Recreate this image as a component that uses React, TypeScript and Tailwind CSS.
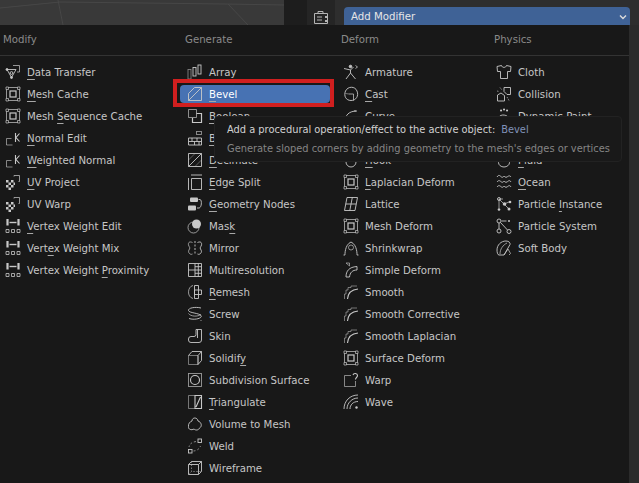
import type { ReactNode } from "react";

const meshBox = (
  <>
    <path d="M3.500 1.500h9M3.500 14.500h9M1.500 3.500v9M14.500 3.500v9" opacity="0.8" />
    <path d="M1 1h2.500v2.500H1zM12.500 1H15v2.500h-2.500zM1 12.500h2.500V15H1zM12.500 12.500H15V15h-2.500z" strokeWidth="0.7" />
    <rect x="5" y="5" width="6" height="6" strokeWidth="1.200" />
  </>
);

const checker = (
  <>
    <path d="M9 2.500V1.500h5.500v6h-1" opacity="0.8" />
    <path
      d="M1 6h2.500v2.500H1zM6 6h2.500v2.500H6zM3.500 8.500H6V11H3.500zM8.500 8.500H10V11H8.500zM1 11h2.500v2.500H1zM6 11h2.500v2.500H6zM3.500 13.500H6V16H3.500z"
      fill="currentColor"
      stroke="none"
    />
  </>
);

const weight = (
  <>
    <path d="M2.500 1v6.500M13.500 1v6.500" strokeWidth="2.200" />
    <path d="M4.500 4.500h7" strokeWidth="1.400" />
    <path d="M1 11.500h3v3H1zM6.500 11.500h3v3h-3zM12 11.500h3v3h-3z" strokeWidth="0.8" />
  </>
);

const normal = (
  <>
    <path d="M1.500 8.500h5M1.500 8.500v6.500h6" opacity="0.7" />
    <path d="M10.500 3v9M14.500 3.500 11 7.500l3.500 4" strokeWidth="1.100" />
  </>
);

const smooth = (
  <>
    <path d="M1.500 15v-5h1.500V6h2V3.500h3V2h6" opacity="0.6" />
    <path d="M4.500 15C5 9 9 5.500 15 5" strokeWidth="1.100" />
  </>
);

const icons: Record<string, ReactNode> = {
  transfer: (
    <>
      <path d="M2 5.500 6.500 13.500 11 5.500z" />
      <circle cx="6.500" cy="9" r="1.400" />
      <path d="M8 1.500h6.500v6.500h-2.500" opacity="0.8" />
      <circle cx="2" cy="5.500" r="1" fill="currentColor" />
      <circle cx="6.500" cy="13.500" r="1" fill="currentColor" />
    </>
  ),
  mesh: meshBox,
  normal,
  uv: checker,
  weight,
  array: (
    <>
      <rect x="1" y="5.500" width="3" height="9.500" opacity="0.6" />
      <rect x="6" y="3.500" width="3" height="8.500" />
      <rect x="11" y="1" width="3" height="9" />
    </>
  ),
  bevel: <path d="M1.500 7.500 7.500 1.500h7v13h-13zM1.500 14.500l13-13" />,
  boolean: (
    <>
      <path d="M1.500 1.500h8v8h-8z" opacity="0.75" />
      <path d="M9.500 5.500h5v9h-9V10" strokeWidth="1.200" />
    </>
  ),
  build: (
    <>
      <path d="M1.500 8h13v7h-13zM1.500 11.500h13M5 8v3.500M10 8v3.500M7.500 11.500V15M12 11.500V15" />
      <rect x="9.500" y="1.500" width="5" height="3" opacity="0.7" />
    </>
  ),
  decimate: (
    <>
      <path d="M1.500 1.500h13v13h-13zM1.500 14.500l13-13" />
      <path d="M1.500 8 8 1.500M8 14.500l6.500-6.500" opacity="0.45" />
    </>
  ),
  split: <path d="M4 1h11M1.500 4v12M4.500 4.500h10v11h-10z" />,
  nodes: (
    <>
      <rect x="3" y="1.500" width="8" height="4.500" rx="1" fill="currentColor" stroke="none" />
      <rect x="1" y="9.500" width="8" height="5" rx="1" fill="currentColor" stroke="none" />
      <path d="M11.500 3.500h1.500c2 0 2 8-1 8.500h-2" />
    </>
  ),
  mask: (
    <>
      <circle cx="6.500" cy="9.500" r="5.500" opacity="0.8" />
      <circle cx="9.500" cy="6" r="4.500" fill="currentColor" stroke="none" />
    </>
  ),
  mirror: (
    <>
      <path d="M8 1v14" strokeDasharray="2 1.500" />
      <path d="M5.500 2.500C2 1 1 3 1.500 5c.5 2 2 2.500 1 4s-1.500 3 0 4.500 3 .5 3 .5" opacity="0.8" />
      <path d="M10.500 2.500c3.500-1.500 4.500.5 4 2.500s-2 2.500-1 4 1.500 3 0 4.500-3 .5-3 .5" />
    </>
  ),
  multires: <path d="M1.500 1.500h13v13h-13zM1.500 8h13M8 1.500v13M11.300 1.500v13M8 4.700h6.500M8 11.300h6.500" />,
  remesh: (
    <>
      <path d="M6 1.500C.5 2.500-.5 13 6 14.500" opacity="0.8" />
      <path d="M7.500 1.500h4v13h-4zM7.500 6h7v4.500h-7z" />
    </>
  ),
  screw: (
    <>
      <path d="M14 2C8 .5 1 2 1.500 4.500S12 7 14 9.500 8 14.500 2 12.500" />
      <path d="M1.500 7.500c2 3 9 3.500 12.500 1M14 14v1" opacity="0.8" />
    </>
  ),
  skin: <path d="M9 1.500h5.500V12a2.500 2.500 0 0 1-2.500 2.500H4A2.500 2.500 0 0 1 1.500 12V11A2.500 2.500 0 0 1 4 8.500h3A2 2 0 0 0 9 6.500zM10.500 1.500V10" />,
  solidify: (
    <>
      <path d="M1.500 5.500h9.500v9h-9.500z" opacity="0.6" />
      <path d="M1.500 5.500 5 1.500h9.500v9L11 14.500M14.500 1.500 11 5.500v9" />
    </>
  ),
  subsurf: (
    <>
      <rect x="1.500" y="1.500" width="13" height="13" opacity="0.75" />
      <circle cx="8" cy="8" r="4.500" strokeWidth="1.100" />
    </>
  ),
  triangulate: (
    <>
      <path d="M8 1.500H1.500v13H8" opacity="0.6" />
      <path d="M8 1.500h6.500v13H8zM9 13 13.500 3" strokeWidth="1.100" />
    </>
  ),
  volume: <path d="M5 5C5 1 10.500 1 11 5c3.500 1 4.500 5.500 1.500 7-1 2.500-4 2.500-5.500 1-2.500 1.500-6 .5-5.500-2.500C1 8 3 5.500 5 5z" />,
  weld: (
    <>
      <rect x="11" y="1" width="3.500" height="3.500" strokeWidth="0.9" />
      <rect x="1.500" y="11.500" width="3.500" height="3.500" strokeWidth="0.9" />
      <path d="M9 3.500C5 4 2.500 6 2 9M6.500 13c3 0 6-2 7-5" strokeDasharray="2 2" opacity="0.7" />
    </>
  ),
  wireframe: (
    <>
      <path d="M1.500 4.500 4.500 1.500h10v10l-3 3h-10zM1.500 4.500h10v10M11.500 4.500l3-3" />
      <path d="M1.500 14.500 4.500 11.500h10M4.500 1.500v10" strokeDasharray="1.500 1.500" opacity="0.6" />
    </>
  ),
  armature: (
    <>
      <circle cx="7.500" cy="2.500" r="1.300" fill="currentColor" />
      <path d="M1 4.500 7.500 6l3-3M7.500 6v3L3 15M7.500 9l5 6" />
      <path d="M12.500 1.500l2 1.500-2 1.500" strokeWidth="0.8" />
    </>
  ),
  cast: (
    <>
      <path d="M2.500 5C5 0 12 0 14 5c2 5-1 9.500-6 9.500S.5 10 2.500 5z" />
      <path d="M6 8h4.500v6.500" opacity="0.85" />
      <path d="M6 8l-3.500-.5" opacity="0.6" />
    </>
  ),
  curve: <path d="M2 14C2 7 6 3 14 3M1 14h3M12 2v2" />,
  hook: <path d="M3 3v7a5 5 0 0 0 10 0V6M13 6l-2.500 2.500" />,
  lattice: <path d="M4 1.500h10.500L12 14.500H1.500zM2.700 8h10.500M9.300 1.500 6.800 14.500" />,
  shrinkwrap: (
    <>
      <path d="M.5 15H2S1.500 5 8 2c6.500 3 6 13 6 13h1.500" />
      <circle cx="8" cy="7.500" r="2.500" opacity="0.75" />
    </>
  ),
  simple: (
    <>
      <path d="M3 1h3.500v3L3 1z" opacity="0.7" />
      <path d="M3 15c0-6 3-10 11-10.500V8C9.500 8 7 10.500 6.500 15z" />
    </>
  ),
  smooth,
  warp: (
    <>
      <path d="M8 3.500H1.500v11h11v-5" opacity="0.7" />
      <path d="M10 3c.5-2 4.500-2 4.500 .5 0 2-2 2-2 4M12.500 9v.5" strokeWidth="1.100" />
    </>
  ),
  wave: (
    <>
      <path d="M1 15C1 7 7 1 15 1M4 15C4 9 9 4 15 4M7 15c0-4 3-7.500 8-7.500" />
      <circle cx="13.500" cy="13.500" r="1.200" fill="currentColor" stroke="none" />
    </>
  ),
  cloth: <path d="M5.500 1.500 1 2.500l.5 5H4.500v7h7v-7h3l.5-5-4.500-1C10 4 6 4 5.500 1.500z" />,
  collision: (
    <>
      <path d="M8 1.500h6.500v7H11L8 5.500zM1.500 9 5 7l3.500 2.500v5.500h-7z" />
      <path d="M4 1.500 6 4M1 5l2 .5M11 11l2 3.500" strokeDasharray="1.500 1" opacity="0.75" />
    </>
  ),
  paint: (
    <>
      <path d="M2 13c-1-8 11-8 12 0" />
      <path d="M5 2.500h.1M8 1.500h.1M11 2.500h.1" strokeWidth="2" strokeLinecap="round" />
    </>
  ),
  explode: <path d="M8 1v4M8 11v4M1 8h4M11 8h4M3 3l3 3M13 3l-3 3M3 13l3-3M13 13l-3-3" />,
  fluid: <path d="M8 1C6 5 2.500 7 2.500 10.500a5.500 4.500 0 0 0 11 0C13.500 7 10 5 8 1z" />,
  ocean: (
    <path d="M1 3c2-3 3-1 4.500 0S8 2 8 2s1.500 2 3 1 2.500-2 4 0M1 8c2-2.500 3-1 4.500 0S8 7 8 7s1.500 2 3 1 2.500-2.500 4 0M1 13c2-2.500 3-1 4.500 0S8 12 8 12s1.500 2 3 1 2.500-2.500 4 0" />
  ),
  instance: (
    <>
      <path d="M3 3 8 8M3 3v9M8 8l5-2M8 8l5 5M3 3h4" opacity="0.8" />
      <circle cx="3" cy="3" r="1.500" />
      <circle cx="8.500" cy="8" r="1.800" fill="currentColor" stroke="none" />
      <circle cx="14" cy="6" r="1.300" fill="currentColor" stroke="none" />
      <circle cx="13" cy="13" r="1.500" fill="currentColor" stroke="none" />
      <circle cx="3" cy="13.500" r="1.300" fill="currentColor" stroke="none" />
    </>
  ),
  particles: (
    <>
      <path d="M4.500 4.500 11.500 12M3 5v6M5.500 3h5" />
      <circle cx="3" cy="3" r="2" />
      <circle cx="3" cy="13" r="2" />
      <circle cx="13" cy="13.500" r="2" />
      <circle cx="13" cy="3" r="1" fill="currentColor" stroke="none" />
    </>
  ),
  softbody: (
    <>
      <path d="M1 10C1 5 5 1 10 1c3 0 4.500 2 4 3.500L8 15H3c-1.500 0-2-3-2-5z" />
      <path d="M4 14C4 9 7 5 11 3M8 15 12 9l2.500 4.500-1.500 1.500" opacity="0.8" />
    </>
  ),
};

function Icon({ name }: { name: string }) {
  return (
    <svg
      viewBox="0 0 16 16"
      className="h-4 w-4 shrink-0 text-[#c8c8c8]"
      fill="none"
      stroke="currentColor"
      strokeWidth="0.9"
    >
      {icons[name]}
    </svg>
  );
}

// [label, icon, index of the underlined letter]
type Item = [string, string, number?];

const columns: { title: string; className: string; items: Item[] }[] = [
  {
    title: "Modify",
    className: "w-[182px]",
    items: [
      ["Data Transfer", "transfer", 0],
      ["Mesh Cache", "mesh", 0],
      ["Mesh Sequence Cache", "mesh", 5],
      ["Normal Edit", "normal", 0],
      ["Weighted Normal", "normal", 0],
      ["UV Project", "uv", 0],
      ["UV Warp", "uv"],
      ["Vertex Weight Edit", "weight", 0],
      ["Vertex Weight Mix", "weight", 4],
      ["Vertex Weight Proximity", "weight", 14],
    ],
  },
  {
    title: "Generate",
    className: "w-[156px]",
    items: [
      ["Array", "array"],
      ["Bevel", "bevel", 0],
      ["Boolean", "boolean", 0],
      ["Build", "build", 0],
      ["Decimate", "decimate", 0],
      ["Edge Split", "split", 0],
      ["Geometry Nodes", "nodes", 0],
      ["Mask", "mask", 3],
      ["Mirror", "mirror"],
      ["Multiresolution", "multires"],
      ["Remesh", "remesh", 0],
      ["Screw", "screw"],
      ["Skin", "skin"],
      ["Solidify", "solidify", 7],
      ["Subdivision Surface", "subsurf"],
      ["Triangulate", "triangulate", 0],
      ["Volume to Mesh", "volume"],
      ["Weld", "weld"],
      ["Wireframe", "wireframe"],
    ],
  },
  {
    title: "Deform",
    className: "w-[153px]",
    items: [
      ["Armature", "armature"],
      ["Cast", "cast", 0],
      ["Curve", "curve", 1],
      ["Displace", "mesh", 0],
      ["Hook", "hook", 0],
      ["Laplacian Deform", "mesh", 0],
      ["Lattice", "lattice"],
      ["Mesh Deform", "mesh"],
      ["Shrinkwrap", "shrinkwrap"],
      ["Simple Deform", "simple"],
      ["Smooth", "smooth"],
      ["Smooth Corrective", "smooth"],
      ["Smooth Laplacian", "smooth"],
      ["Surface Deform", "mesh"],
      ["Warp", "warp"],
      ["Wave", "wave"],
    ],
  },
  {
    title: "Physics",
    className: "w-[138px]",
    items: [
      ["Cloth", "cloth"],
      ["Collision", "collision"],
      ["Dynamic Paint", "paint"],
      ["Explode", "explode"],
      ["Fluid", "fluid", 0],
      ["Ocean", "ocean", 0],
      ["Particle Instance", "instance", 9],
      ["Particle System", "particles"],
      ["Soft Body", "softbody"],
    ],
  },
];

function Label({ text, at }: { text: string; at?: number }) {
  if (at === undefined) return <span className="pt-[1px]">{text}</span>;
  return (
    <span className="pt-[1px]">
      {text.slice(0, at)}
      <u className="underline decoration-[#a8a8a8] underline-offset-[3px] [text-decoration-skip-ink:none]">{text[at]}</u>
      {text.slice(at + 1)}
    </span>
  );
}

function Row({ item }: { item: Item }) {
  const [label, icon, at] = item;
  const active = label === "Bevel";
  return (
    <div className="flex h-[22px] items-center">
      <div
        className={
          active
            ? "-ml-[2px] flex h-[18px] w-[150px] items-center gap-[6px] rounded-[4px] bg-[#4772b3] pl-[7px] text-white"
            : "flex h-[18px] items-center gap-[6px] pl-[5px]"
        }
      >
        <Icon name={icon} />
        <Label text={label} at={at} />
      </div>
    </div>
  );
}

export default function App() {
  return (
    <div className="relative h-[483px] w-[639px] overflow-hidden bg-[#2b2b2b] font-['DejaVu_Sans',sans-serif] text-[10.2px] text-[#c6c6c6]">
      <div className="flex h-[25px]">
        <div className="w-[284px] bg-[#393939]">
          <svg viewBox="0 0 284 25" className="h-full w-full" fill="none" stroke="#474747">
            <path d="M0 8 60 2l165 2 59 1M58 0l5 25M228 4l20 21" />
          </svg>
        </div>
        <div className="w-[23px] bg-[#1d1d1d]" />
        <div className="flex w-[28px] items-end justify-center bg-[#252525] pb-[1px]">
          <svg viewBox="0 0 16 14" className="h-[14px] w-[16px] text-[#b5b5b5]" fill="none" stroke="currentColor">
            <path d="M1.500 3.500h13v10h-13zM5 3.500V1.500h5v2M4 7h5M4 10h5" />
            <path d="M12 6h2v2h-2zM12 10h2v2h-2z" fill="currentColor" stroke="none" />
          </svg>
        </div>
        <div className="flex-1 bg-[#2e2e2e] pl-[9px] pr-[9px] pt-[7px]">
          <div className="flex h-[18px] items-center justify-between rounded-t-[4px] bg-[#3f6296] pl-[7px] pr-[2px] pt-[1px] text-[#e6e6e6]">
            <span>Add Modifier</span>
            <svg viewBox="0 0 10 10" className="h-[10px] w-[10px] text-[#dcdcdc]" fill="none" stroke="currentColor" strokeWidth="1.400">
              <path d="M2 3.500 5 6.500l3-3" />
            </svg>
          </div>
        </div>
      </div>

      <div className="h-[458px] w-[629px] bg-[#181818]">
        <div className="flex h-[31px] items-center border-b border-[#333333] text-[#8a8a8a]">
          {columns.map((col) => (
            <div key={col.title} className={`${col.className} pl-[3px]`}>
              {col.title}
            </div>
          ))}
        </div>
        <div className="flex pt-[5px]">
          {columns.map((col) => (
            <div key={col.title} className={col.className}>
              {col.items.map((item) => (
                <Row key={item[0]} item={item} />
              ))}
            </div>
          ))}
        </div>
      </div>

      <div className="absolute left-[173px] top-[79px] h-[28px] w-[161px] border-[4px] border-[#d01f1f]" />

      <div className="absolute left-[214px] top-[116px] flex h-[46px] w-[408px] flex-col justify-center gap-[4px] whitespace-nowrap rounded-[4px] border border-[#222222] bg-[#191919] pl-[12px] pt-[1px] text-[9.85px]">
        <div className="text-[#d2d2d2]">
          Add a procedural operation/effect to the active object:<span className="ml-[6px] text-[#8092b8]">Bevel</span>
        </div>
        <div className="text-[#858585]">Generate sloped corners by adding geometry to the mesh's edges or vertices</div>
      </div>
    </div>
  );
}
